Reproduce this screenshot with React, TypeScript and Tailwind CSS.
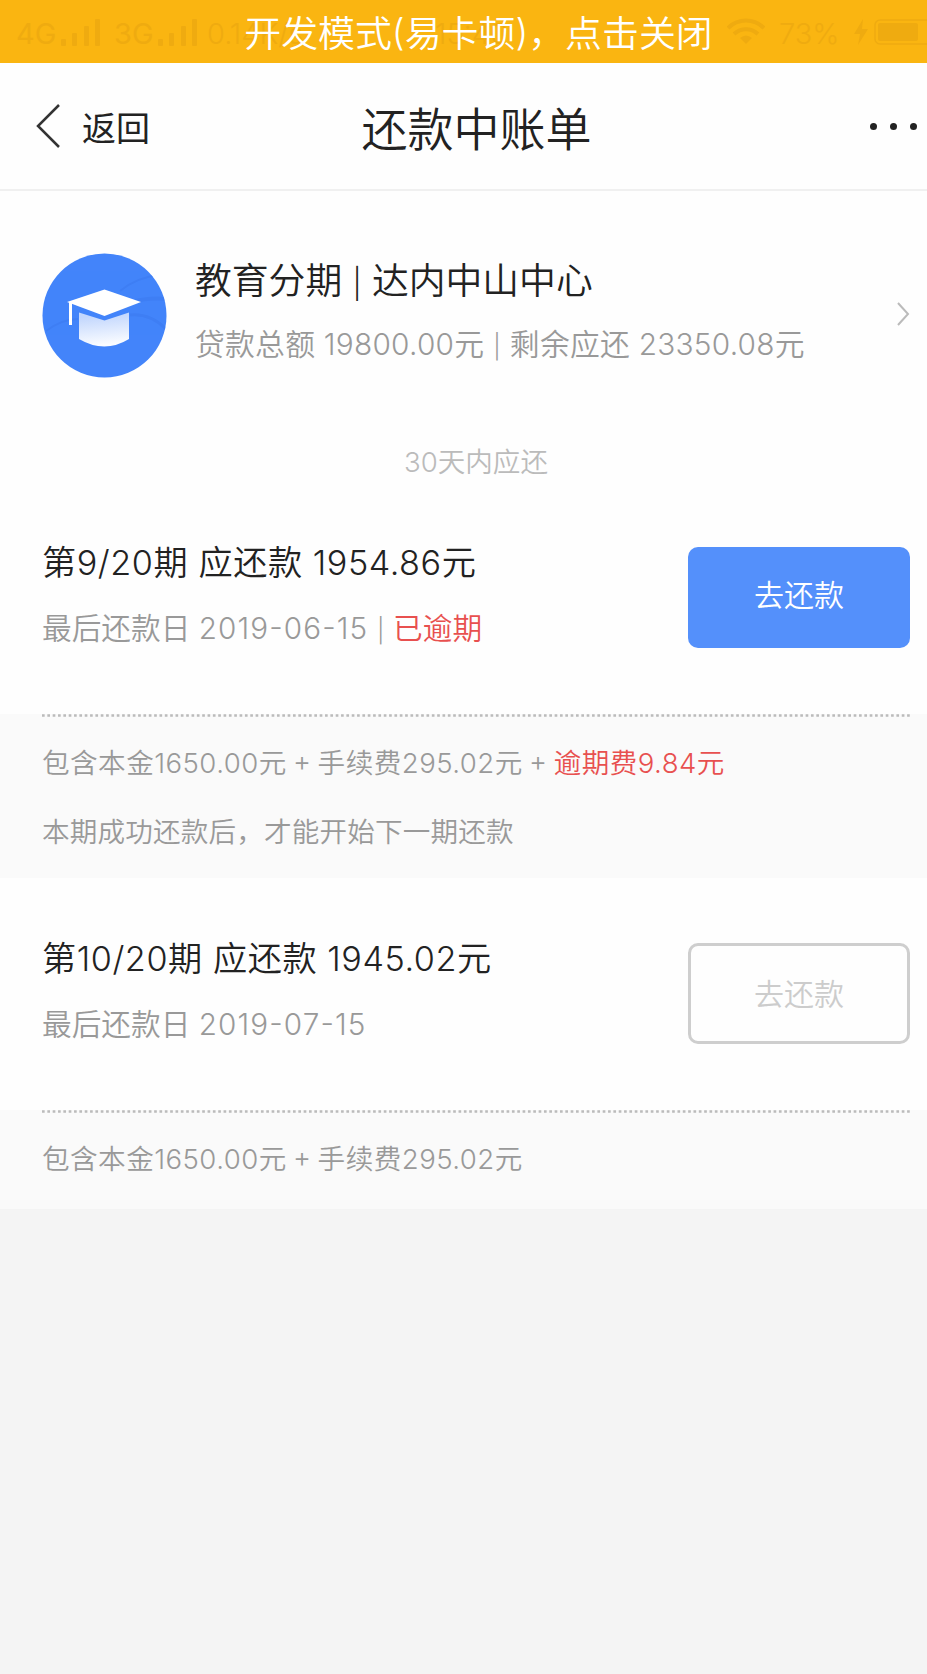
import type { ReactNode } from 'react';

type Bill = {
  id: number;
  title: string;
  date: string;
  overdue?: string;
  parts: string;
  overdueFee?: string;
  hint?: string;
  payable: boolean;
};

const BILLS: Bill[] = [
  {
    id: 9,
    title: '第9/20期 应还款 1954.86元',
    date: '2019-06-15',
    overdue: '已逾期',
    parts: '包含本金1650.00元 + 手续费295.02元',
    overdueFee: '逾期费9.84元',
    hint: '本期成功还款后，才能开始下一期还款',
    payable: true,
  },
  {
    id: 10,
    title: '第10/20期 应还款 1945.02元',
    date: '2019-07-15',
    parts: '包含本金1650.00元 + 手续费295.02元',
    payable: false,
  },
];

function Signal() {
  return (
    <svg width="42" height="30" viewBox="0 0 42 30" fill="currentColor">
      <rect x="1" y="22" width="5" height="7" rx="1" />
      <rect x="12" y="16" width="5" height="13" rx="1" />
      <rect x="24" y="9" width="5" height="20" rx="1" />
      <rect x="35" y="2" width="5" height="27" rx="1" />
    </svg>
  );
}

function StatusBar() {
  return (
    <div className="absolute inset-0 flex items-center overflow-hidden whitespace-nowrap text-[29px] text-[#efab10]">
      <span className="ml-4 w-[44px] pt-1 font-normal">4G</span>
      <Signal />
      <span className="ml-3 w-[43px] pt-1 font-normal">3G</span>
      <Signal />
      <span className="ml-2 w-[110px] pt-1">0.14K/s</span>
      <span className="ml-[118px] pt-1">15:40</span>
      <svg className="ml-auto mr-[14px] shrink-0" width="38" height="28" viewBox="0 0 38 28" fill="none" stroke="currentColor" strokeWidth="4">
        <path d="M1 10C11 0 27 0 37 10" />
        <path d="M7 16C14 9.500 24 9.500 31 16" />
        <path d="M13 20Q19 15 25 20L19 26Z" fill="currentColor" stroke="none" />
      </svg>
      <span className="w-[74px] pt-1">73%</span>
      <svg className="shrink-0" width="16" height="26" viewBox="0 0 16 26" fill="currentColor">
        <path d="M10 0L1 15H7L5 26L15 10H9Z" />
      </svg>
      <svg className="ml-1 shrink-0" width="54" height="28" viewBox="0 0 54 28">
        <rect x="2" y="2" width="60" height="24" rx="5" fill="none" stroke="currentColor" strokeWidth="1.500" />
        <rect x="5" y="5" width="40" height="18" rx="2" fill="currentColor" />
      </svg>
    </div>
  );
}

function CapIcon() {
  return (
    <svg className="shrink-0" width="125" height="125" viewBox="0 0 125 125">
      <defs>
        <linearGradient id="cap" x1="0" y1="0" x2="0.15" y2="1">
          <stop offset="0.15" stopColor="#c3d7fd" />
          <stop offset="1" stopColor="#fafcff" />
        </linearGradient>
        <clipPath id="disc">
          <circle cx="62.500" cy="62.500" r="62" />
        </clipPath>
      </defs>
      <circle cx="62.500" cy="62.500" r="62" fill="#4384fa" />
      <g clipPath="url(#disc)" fill="none" stroke="#3a78ee" strokeWidth="2" opacity="0.5">
        <path d="M78 38Q95 24 118 22" />
        <path d="M86 50Q105 44 126 46" strokeWidth="4" />
        <path d="M88 62Q108 60 124 76" strokeWidth="3" />
        <path d="M4 78Q20 66 36 66" />
      </g>
      <path d="M25 49L62.500 36.500L99 49L62.500 63Z" fill="#fff" />
      <path d="M27 49H30V72H27Z" fill="#fff" />
      <path d="M37 59.500L62.500 67.500L87 59.500V86Q62.500 101 37 86Z" fill="url(#cap)" />
    </svg>
  );
}

function Row({ className, children }: { className: string; children: ReactNode }) {
  return <p className={`whitespace-pre ${className}`}>{children}</p>;
}

function Pipe() {
  return <span className="px-[2px] text-[0.8em]"> | </span>;
}

function BillItem({ bill }: { bill: Bill }) {
  return (
    <section>
      <div className="flex h-[232px] items-start justify-between bg-[#fefefe] pl-[42px] pr-[17px] pt-[65px]">
        <div className="pt-[4px]">
          <Row className="h-[24px] text-[34.2px] leading-[24px] tracking-[0.55px] text-[#222]">{bill.title}</Row>
          <Row className="mt-[41px] h-[24px] text-[29.7px] leading-[24px] text-[#999]">
            最后还款日 <span className="tracking-[1.1px]">{bill.date}</span>
            {bill.overdue && (
              <>
                <Pipe />
                <span className="text-[#e8504f]">{bill.overdue}</span>
              </>
            )}
          </Row>
        </div>
        <button
          disabled={!bill.payable}
          className={`flex h-[101px] w-[222px] items-center justify-center rounded-[10px] text-[30px] ${
            bill.payable ? 'bg-[#5490fb] pb-1 text-white' : 'border-3 border-[#cecece] pt-[2px] text-[#ccc]'
          }`}
        >
          去还款
        </button>
      </div>
      <div className="bg-[#fafafa] pb-[38px] text-[27.6px] text-[#999]">
        <svg className="ml-[42px] block" width="868" height="3">
          <path d="M0 1.500H868" stroke="#bbb" strokeWidth="2.700" strokeDasharray="2.67 2.67" />
        </svg>
        <Row className="ml-[42px] mt-[34px] h-[24px] leading-[24px] tracking-[0.45px] [word-spacing:-2px]">
          {bill.parts}
          {bill.overdueFee && (
            <>
              {' + '}
              <span className="text-[#e8504f]">{bill.overdueFee}</span>
            </>
          )}
        </Row>
        {bill.hint && <Row className="ml-[42px] mt-[45px] h-[20px] leading-[24px] tracking-[0.15px]">{bill.hint}</Row>}
      </div>
    </section>
  );
}

export default function App() {
  return (
    <div className="min-h-[1674px] w-[927px] overflow-hidden bg-[#f4f4f4] font-['Inter','Noto_Sans_CJK_SC',sans-serif] font-[350] [font-feature-settings:'case']">
      <div className="relative flex h-[63px] items-center justify-center bg-[#fab511]">
        <StatusBar />
        <p className="relative ml-[30px] pt-[5px] whitespace-nowrap text-[36.9px] leading-[40px] text-white">开发模式(易卡顿)，点击关闭</p>
      </div>

      <header className="grid h-[128px] grid-cols-[1fr_auto_1fr] items-center border-b-2 border-[#f0f0f0] bg-[#fefefe] pl-[36px] pr-[10px]">
        <div className="flex items-center gap-[22px] text-[34px] text-[#222]">
          <svg width="24" height="46" viewBox="0 0 24 46" fill="none" stroke="#333" strokeWidth="2.500">
            <path d="M23 2L2 23L23 44" />
          </svg>
          <span className="pt-1 font-normal">返回</span>
        </div>
        <h1 className="pt-[7px] text-[46px] text-[#222]">还款中账单</h1>
        <div className="flex justify-end gap-[13px]">
          <i className="size-[7px] rounded-full bg-[#222]" />
          <i className="size-[7px] rounded-full bg-[#222]" />
          <i className="size-[7px] rounded-full bg-[#222]" />
        </div>
      </header>

      <div className="flex h-[187px] items-end bg-[#fefefe] pl-[42px] pr-[17px]">
        <CapIcon />
        <div className="ml-[28px] flex-1 self-start pt-[78px]">
          <Row className="h-[24px] text-[36.8px] leading-[24px] text-[#222]">
            教育分期<Pipe />达内中山中心
          </Row>
          <Row className="mt-[39px] h-[24px] text-[29.8px] leading-[24px] tracking-[0.25px] text-[#999]">
            贷款总额 19800.00元<Pipe />剩余应还 23350.08元
          </Row>
        </div>
        <svg className="mb-[52px]" width="14" height="24" viewBox="0 0 14 24" fill="none" stroke="#bbb" strokeWidth="2">
          <path d="M2 1L12 12L2 23" />
        </svg>
      </div>

      <p className="flex h-[104px] items-end justify-center bg-[#fefefe] pb-[6px] pl-[25px] text-[27.6px] leading-[28px] text-[#bbb]">30天内应还</p>

      {BILLS.map(bill => (
        <BillItem key={bill.id} bill={bill} />
      ))}
    </div>
  );
}
